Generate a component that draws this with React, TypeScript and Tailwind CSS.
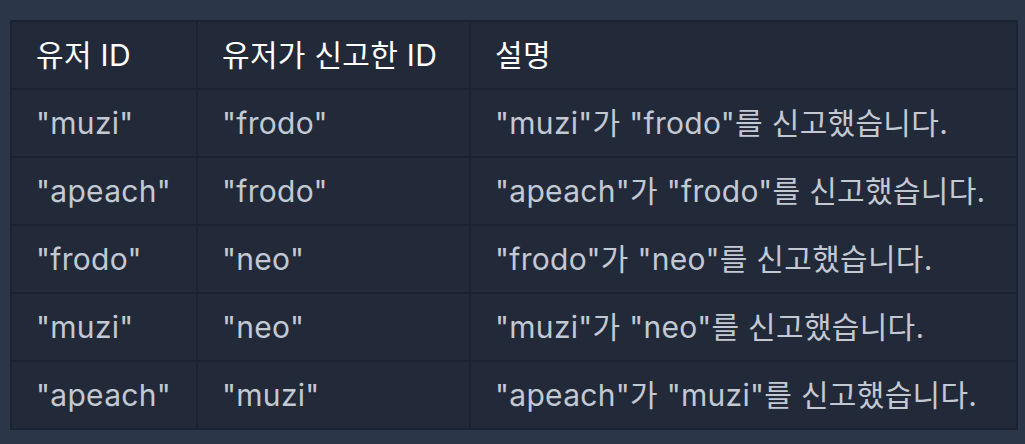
import React from 'react';

const rows = [
  ['"muzi"', '"frodo"', '"muzi"가 "frodo"를 신고했습니다.'],
  ['"apeach"', '"frodo"', '"apeach"가 "frodo"를 신고했습니다.'],
  ['"frodo"', '"neo"', '"frodo"가 "neo"를 신고했습니다.'],
  ['"muzi"', '"neo"', '"muzi"가 "neo"를 신고했습니다.'],
  ['"apeach"', '"muzi"', '"apeach"가 "muzi"를 신고했습니다.'],
];

export default function App() {
  return (
    <div
      className="w-[1025px] h-[444px] bg-[#2b3648] pl-[10px] pt-[20px]"
      style={{ fontFamily: 'Inter, "Noto Sans CJK KR", sans-serif' }}
    >
      <table className="border-collapse table-fixed w-[1008px] bg-[#222a3a] text-[30px] tracking-[0.3px]">
        <colgroup>
          <col className="w-[186px]" />
          <col className="w-[273px]" />
          <col />
        </colgroup>
        <thead>
          <tr className="h-[68px]">
            {['유저 ID', '유저가 신고한 ID', '설명'].map((h) => (
              <th
                key={h}
                className="border-2 border-[#1b2231] text-left font-normal text-white pl-[24px] whitespace-nowrap"
              >
                {h}
              </th>
            ))}
          </tr>
        </thead>
        <tbody>
          {rows.map((r, i) => (
            <tr key={i} className="h-[68px]">
              {r.map((c, j) => (
                <td
                  key={j}
                  className="border-2 border-[#1b2231] text-[#c3c9d3] pl-[24px] whitespace-nowrap"
                >
                  {c}
                </td>
              ))}
            </tr>
          ))}
        </tbody>
      </table>
    </div>
  );
}
